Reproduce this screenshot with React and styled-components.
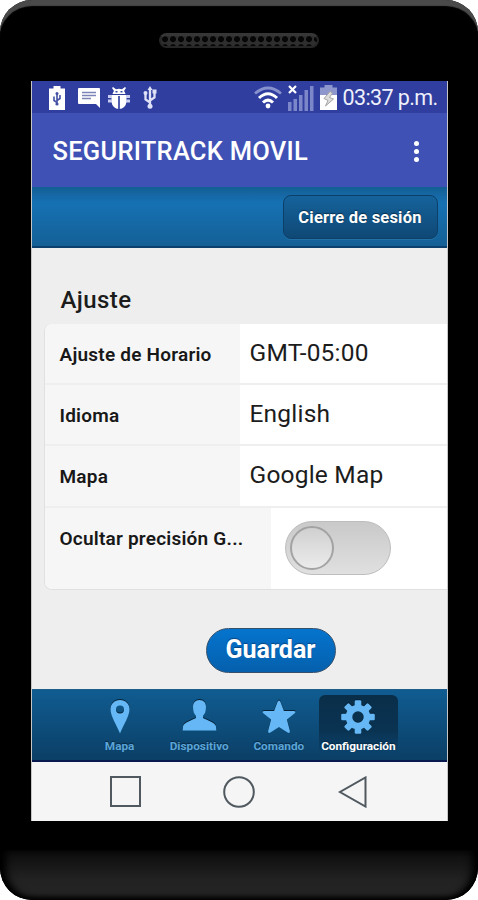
import { useState } from "react"
import styled, { createGlobalStyle } from "styled-components"

const ajustes = [
    { label: "Ajuste de Horario", value: "GMT-05:00", alto: 59 },
    { label: "Idioma", value: "English", alto: 61 },
    { label: "Mapa", value: "Google Map", alto: 62 },
]

const tabs = [
    { name: "Mapa", icon: <PinIcon /> },
    { name: "Dispositivo", icon: <UserIcon /> },
    { name: "Comando", icon: <StarIcon /> },
    { name: "Configuración", icon: <GearIcon /> },
]

export default function App() {
    const [tab, setTab] = useState("Configuración")
    const [oculto, setOculto] = useState(false)

    return (
        <Telefono>
            <GlobalStyle />
            <Bisel>
                <Altavoz />
            </Bisel>
            <Pantalla>
                <BarraEstado>
                    <Notificaciones>
                        <BatteryUsbIcon />
                        <MessageIcon />
                        <BugIcon />
                        <UsbIcon />
                    </Notificaciones>
                    <Sistema>
                        <WifiIcon />
                        <SignalIcon />
                        <BatteryIcon />
                        <Hora>03:37 p.m.</Hora>
                    </Sistema>
                </BarraEstado>
                <BarraApp>
                    <h1>SEGURITRACK MOVIL</h1>
                    <Menu>
                        <span />
                        <span />
                        <span />
                    </Menu>
                </BarraApp>
                <Encabezado>
                    <BotonSesion>Cierre de sesión</BotonSesion>
                </Encabezado>
                <Contenido>
                    <h2>Ajuste</h2>
                    <Formulario>
                        {ajustes.map(ajuste => (
                            <Fila key={ajuste.label} $alto={ajuste.alto}>
                                <Etiqueta $ancho={195}>{ajuste.label}</Etiqueta>
                                <Valor>{ajuste.value}</Valor>
                            </Fila>
                        ))}
                        <Fila $alto={83}>
                            <Etiqueta $ancho={226}>Ocultar precisión G...</Etiqueta>
                            <Interruptor $activo={oculto} onClick={() => setOculto(!oculto)}>
                                <Perilla />
                            </Interruptor>
                        </Fila>
                    </Formulario>
                    <BotonGuardar>Guardar</BotonGuardar>
                </Contenido>
                <BarraTabs>
                    {tabs.map(item => (
                        <Tab key={item.name} $activo={item.name === tab} onClick={() => setTab(item.name)}>
                            {item.icon}
                            <p>{item.name}</p>
                        </Tab>
                    ))}
                </BarraTabs>
                <Navegacion>
                    <svg width="32" height="32" viewBox="0 0 32 32">
                        <rect x="2" y="1" width="29" height="29" />
                    </svg>
                    <svg width="32" height="32" viewBox="0 0 32 32">
                        <circle cx="16" cy="16" r="14.8" />
                    </svg>
                    <svg width="32" height="32" viewBox="0 0 32 32">
                        <path d="M28.5 1.5v29L3 16z" />
                    </svg>
                </Navegacion>
            </Pantalla>
            <Base />
        </Telefono>
    )
}

function BatteryUsbIcon() {
    return (
        <svg width="16" height="24" viewBox="0 0 16 24">
            <path fill="#fff" d="M4.5 0h7v2.500H16V24H0V2.500h4.500z" />
            <path fill="none" stroke="#4350a3" strokeWidth="1.6" d="M8 7v12M8 16.500l-3-2v-4M8 14.500l3-2V9" />
            <circle cx="8" cy="18" r="1.6" fill="#4350a3" />
            <circle cx="8" cy="7.500" r="1.5" fill="#4350a3" />
        </svg>
    )
}

function MessageIcon() {
    return (
        <svg width="22" height="20" viewBox="0 0 22 20">
            <path fill="#fff" d="M1 0h20q1 0 1 1v19l-4-4H1q-1 0-1-1V1q0-1 1-1z" />
            <path stroke="#7d84b8" strokeWidth="1.5" d="M4 4.500h14M4 7.500h14M4 10.500h9" />
        </svg>
    )
}

function BugIcon() {
    return (
        <svg width="22" height="22" viewBox="0 0 22 22">
            <path fill="#fff" d="M5 0l3 2.300q3-1 6 0L17 0l1 1-2 3q1 1 1.500 3h-13Q5 5 6 4L4 1z" />
            <path fill="#fff" d="M3.500 8h15v7q-1 6.500-7.500 7Q4.500 21.500 3.500 15z" />
            <path stroke="#c9cdef" strokeWidth="3" d="M0 9.500h4M0 14h4M18 9.500h4M18 14h4" />
            <path stroke="#3545a0" strokeWidth="1.7" d="M11 9v13" />
            <path fill="#3545a0" d="M7.500 4h2v1.500h-2zM12.500 4h2v1.500h-2z" />
        </svg>
    )
}

function UsbIcon() {
    return (
        <svg width="14" height="23" viewBox="0 0 14 23">
            <path fill="none" stroke="#dfe2f7" strokeWidth="2.3" d="M7 3v17M7 16.500l-4.500-3V8M7 14.500l4.500-3V7" />
            <path fill="#dfe2f7" d="M7 0l2.500 4h-5zM9.500 3.500h4v4h-4z" />
            <circle cx="2.500" cy="7" r="2" fill="#dfe2f7" />
            <circle cx="7" cy="20.300" r="2.5" fill="#dfe2f7" />
        </svg>
    )
}

function WifiIcon() {
    return (
        <svg width="28" height="23" viewBox="0 0 28 23">
            <path fill="none" stroke="#8791cd" strokeWidth="2.8" d="M1 7.500Q14-3.500 27 7.500" />
            <path fill="none" stroke="#fff" strokeWidth="3" d="M5 12Q14 3.500 23 12M9 16.500q5-4.800 10 0" />
            <circle cx="14" cy="20" r="2.4" fill="#fff" />
        </svg>
    )
}

function SignalIcon() {
    return (
        <svg width="26" height="26" viewBox="0 0 26 26">
            <path stroke="#fff" strokeWidth="2.2" d="M1 1l7 7M8 1L1 8" />
            <path fill="#7c87ca" d="M0 17h3.500v9H0zM5.500 14H9v12H5.500zM11 10h3.500v16H11zM16.500 5H20v21h-3.500zM22 1h3.500v25H22z" />
        </svg>
    )
}

function BatteryIcon() {
    return (
        <svg width="17" height="25" viewBox="0 0 17 25">
            <path fill="#8e97cd" d="M4.500 0h8v2.500H17V11H0V2.500h4.500z" />
            <path fill="#fff" d="M0 10h17v15H0z" />
            <path fill="#dcdcdc" stroke="#a5a5a5" strokeWidth="1" d="M10 6.500L4 13.500l4 2-2.500 5.500 8-7-4-1.500 3-4.500z" />
        </svg>
    )
}

function PinIcon() {
    return (
        <IconoTab viewBox="0 0 36 36">
            <path fillRule="evenodd" d="M18 1c5.500 0 9.500 4 9.500 9.300C27.500 17 21.500 26 18 34.500 14.500 26 8.500 17 8.500 10.300 8.500 5 12.500 1 18 1zm0 5.500a4 4 0 1 0 0 8 4 4 0 0 0 0-8z" />
        </IconoTab>
    )
}

function UserIcon() {
    return (
        <IconoTab viewBox="0 0 36 36">
            <path d="M18.500 1c4.300 0 6.500 3 6.500 7 0 4.500-1.200 7-3 8.700v2.300c3 2 12.500 4.200 13 8.500l.3 4H1.700l.3-4c.5-4.300 10-6.500 13-8.500v-2.300c-1.800-1.700-3-4.200-3-8.700 0-4 2.200-7 6.500-7z" />
        </IconoTab>
    )
}

function StarIcon() {
    return (
        <IconoTab viewBox="0 0 36 36">
            <path d="M18 1.500q1 0 1.500 1.500l3.400 9H33q2.500.5.700 2.300l-7.800 6.200 3 11.500q0 2.800-2.300 1.500L18 28l-8.600 5.500q-2.300 1.300-2.300-1.500l3-11.500-7.800-6.200Q.5 12.500 3 12h10.100l3.400-9q.5-1.500 1.500-1.500z" />
        </IconoTab>
    )
}

function GearIcon() {
    return (
        <IconoTab viewBox="0 0 36 36">
            {[0, 45, 90, 135, 180, 225, 270, 315].map(angulo => (
                <rect key={angulo} x="14.7" y="1.2" width="6.6" height="10" rx="1.3" transform={`rotate(${angulo} 18 18)`} />
            ))}
            <path fillRule="evenodd" d="M18 5.700a12.300 12.300 0 1 0 0 24.600 12.300 12.300 0 0 0 0-24.600zm0 6.600a5.700 5.700 0 1 1 0 11.400 5.700 5.700 0 0 1 0-11.400z" />
        </IconoTab>
    )
}


const GlobalStyle = createGlobalStyle`
    * {
        box-sizing: border-box;
    }
    body {
        margin: 0;
        background-color: #fff;
        font-family: Roboto, "Liberation Sans", sans-serif;
    }
    h1, h2, p {
        margin: 0;
    }
    button {
        font-family: inherit;
        padding: 0;
        cursor: pointer;
    }
    svg {
        display: block;
        flex-shrink: 0;
    }
`

const Telefono = styled.div`
    display: flex;
    flex-direction: column;
    align-items: center;
    width: 478px;
    height: 900px;
    border-radius: 32px;
    background-color: #000;
    overflow: hidden;
    box-shadow: inset 0 7px 1px -1px #4a4a4a;
`

const Bisel = styled.div`
    display: flex;
    justify-content: center;
    width: 100%;
    height: 81px;
    padding-top: 33px;
    flex-shrink: 0;
`

const Altavoz = styled.div`
    width: 160px;
    height: 15px;
    border: 2px solid #262626;
    border-top: 3px solid #363636;
    border-radius: 8px;
    background-color: #101010;
    background-image: radial-gradient(circle at 50% 40%, #050505 2.5px, #2e2e2e 3.5px);
    background-size: 8px 8px;
`

const Pantalla = styled.div`
    display: flex;
    flex-direction: column;
    width: 417px;
    height: 740px;
    flex-shrink: 0;
    background-color: #eee;
    border-left: 1px solid #77777a55;
    border-right: 1px solid #77777a55;
    overflow: hidden;
`

const BarraEstado = styled.div`
    display: flex;
    justify-content: space-between;
    height: 32px;
    flex-shrink: 0;
    padding: 4px 9px 0 17px;
    background-color: #303f9f;
`

const Notificaciones = styled.div`
    display: flex;
    align-items: center;
    height: 25px;
    gap: 13px;
    svg:nth-child(3) {
        margin-left: -5px;
    }
`

const Sistema = styled.div`
    display: flex;
    align-items: center;
    height: 25px;
    gap: 6px;
`

const Hora = styled.p`
    width: 95px;
    color: #eef0fb;
    font-size: 21.5px;
    line-height: 25px;
    letter-spacing: -0.6px;
    white-space: nowrap;
`

const BarraApp = styled.div`
    display: flex;
    align-items: center;
    justify-content: space-between;
    height: 74px;
    flex-shrink: 0;
    padding: 2px 28px 0 21px;
    background-color: #3f51b5;
    h1 {
        color: #fff;
        font-size: 25.5px;
        font-weight: 500;
        letter-spacing: 0.25px;
        white-space: nowrap;
    }
`

const Menu = styled.div`
    display: flex;
    flex-direction: column;
    gap: 3px;
    span {
        width: 5px;
        height: 5px;
        border-radius: 50%;
        background-color: #fff;
    }
`

const Encabezado = styled.div`
    display: flex;
    justify-content: flex-end;
    height: 61px;
    flex-shrink: 0;
    padding: 8px 9px 0 0;
    background: linear-gradient(#125f93 0, #1565a0 6px, #1671b3 16px, #146096 100%);
    border-bottom: 2px solid #0b3f6d;
`

const BotonSesion = styled.button`
    width: 155px;
    height: 44px;
    border: 1px solid #0c4068;
    border-radius: 8px;
    background: linear-gradient(#15639c, #0f4875);
    color: #fff;
    font-size: 16.5px;
    font-weight: 700;
    letter-spacing: 0.2px;
    text-shadow: 0 -1px 1px #0a3050;
    box-shadow: 0 1px 0 #2272a8;
`

const Contenido = styled.div`
    display: flex;
    flex-direction: column;
    height: 441px;
    flex-shrink: 0;
    padding-left: 12px;
    background-color: #eee;
    h2 {
        height: 76px;
        padding: 38px 0 0 17px;
        color: #1c1c1c;
        font-size: 24px;
        line-height: 29px;
        font-weight: 500;
        letter-spacing: 0.4px;
    }
`

const Formulario = styled.div`
    display: flex;
    flex-direction: column;
    height: 266px;
    flex-shrink: 0;
    border: 1px solid #e0e0e0;
    border-top: none;
    border-right: none;
    border-radius: 8px 0 0 8px;
    background-color: #fff;
    overflow: hidden;
`

const Fila = styled.div`
    display: flex;
    height: ${props => props.$alto}px;
    flex-shrink: 0;
    & + & {
        border-top: 2px solid #efefef;
    }
`

const Etiqueta = styled.label`
    width: ${props => props.$ancho}px;
    padding: 19px 0 0 15px;
    flex-shrink: 0;
    background-color: #f6f6f6;
    color: #181818;
    font-size: 19px;
    line-height: 24px;
    font-weight: 600;
    letter-spacing: 0.22px;
    white-space: nowrap;
`

const Valor = styled.p`
    padding: 14px 0 0 10px;
    color: #1c1c1c;
    font-size: 24.5px;
    line-height: 30px;
    letter-spacing: 0.2px;
`

const Interruptor = styled.button`
    display: flex;
    justify-content: ${props => props.$activo ? "flex-end" : "flex-start"};
    align-items: center;
    width: 106px;
    height: 54px;
    margin: 13px 0 0 14px;
    padding: 0 4px;
    border: 1px solid #bdbdbd;
    border-radius: 27px;
    background: ${props => props.$activo ? "#1671b3" : "linear-gradient(#c9c9c9, #e0e0e0)"};
`

const Perilla = styled.span`
    width: 44px;
    height: 44px;
    border: 2px solid #a3a3a3;
    border-radius: 50%;
    background: linear-gradient(#d0d0d0, #ebebeb);
`

const BotonGuardar = styled.button`
    width: 130px;
    height: 45px;
    margin: 38px 0 0 162px;
    padding-bottom: 2px;
    border: 1px solid #35506b;
    border-radius: 23px;
    background: linear-gradient(#0574ce, #0560ad);
    color: #fff;
    font-size: 25px;
    font-weight: 700;
    text-shadow: 0 -1px 1px #0a4580;
`

const BarraTabs = styled.div`
    display: flex;
    justify-content: center;
    height: 73px;
    flex-shrink: 0;
    padding-top: 5px;
    border-top: 1px solid #1d5e8a;
    border-bottom: 2px solid #07194f;
    background: linear-gradient(#105c91, #0b3f66);
`

const Tab = styled.div`
    display: flex;
    flex-direction: column;
    align-items: center;
    width: 79.6px;
    height: 60px;
    padding-top: 4px;
    border-radius: 6px;
    background: ${props => props.$activo ? "linear-gradient(#092e49, #0a3352 60%, #0b426c 95%)" : "none"};
    cursor: pointer;
    p {
        margin-top: 3px;
        color: ${props => props.$activo ? "#fff" : "#5ba5d8"};
        font-size: 11.8px;
        line-height: 17px;
        font-weight: 700;
        white-space: nowrap;
        text-shadow: 0 -1px 1px #062640;
    }
`

const IconoTab = styled.svg`
    width: 36px;
    height: 36px;
    fill: #65b8f5;
    filter: drop-shadow(0 -1px 0 #062238);
`

const Navegacion = styled.div`
    display: flex;
    justify-content: center;
    align-items: center;
    gap: 82px;
    height: 59px;
    flex-shrink: 0;
    background-color: #f5f5f5;
    svg {
        fill: none;
        stroke: #50595f;
        stroke-width: 2;
    }
`

const Base = styled.div`
    width: 100%;
    height: 50px;
    margin-top: 29px;
    flex-shrink: 0;
    border-radius: 0 0 32px 32px;
    background: linear-gradient(#0c0c0c, #222 60%, #242424);
    box-shadow: inset 0 -2px 5px 1px #000, inset 10px 0 8px -4px #000, inset -10px 0 8px -4px #000;
`
